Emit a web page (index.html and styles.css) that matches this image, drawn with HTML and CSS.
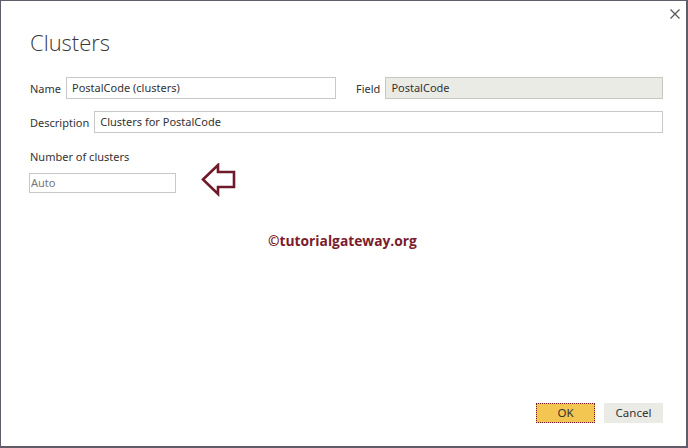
FILE: index.html
```html
<!DOCTYPE html>
<html>
<head>
<meta charset="utf-8">
<link rel="stylesheet" href="styles.css">
</head>
<body>
<div class="dialog">
  <div class="close">
    <svg width="10" height="10" viewBox="0 0 10 10"><path d="M0.5 0.5L9.5 9.5M9.5 0.5L0.5 9.5" stroke="#555" stroke-width="1.2" fill="none"/></svg>
  </div>
  <h1 class="title">Clusters</h1>
  <div class="row row-name">
    <label class="lbl">Name</label>
    <div class="input name-input">PostalCode (clusters)</div>
    <label class="lbl field-lbl">Field</label>
    <div class="input field-input">PostalCode</div>
  </div>
  <div class="row row-desc">
    <label class="lbl">Description</label>
    <div class="input desc-input">Clusters for PostalCode</div>
  </div>
  <div class="num-lbl">Number of clusters</div>
  <div class="row row-num">
    <div class="input num-input">Auto</div>
    <svg class="arrow" width="36" height="36" viewBox="0 0 36 36"><path d="M2 16.5L17 2V9H33V24H17V31Z" fill="none" stroke="#6e1a2b" stroke-width="2.6" stroke-linejoin="miter"/></svg>
  </div>
  <div class="watermark">©tutorialgateway.org</div>
  <div class="spacer"></div>
  <div class="buttons">
    <div class="btn ok">OK</div>
    <div class="btn cancel">Cancel</div>
  </div>
</div>
</body>
</html>
```
FILE: styles.css
```css
html, body {
  margin: 0;
  padding: 0;
  background: #fff;
}
.dialog {
  box-sizing: border-box;
  width: 688px;
  height: 448px;
  border-top: 1px solid #615c68;
  border-left: 1px solid #615c68;
  border-right: 2px solid #615c68;
  border-bottom: 2px solid #615c68;
  position: relative;
  display: flex;
  flex-direction: column;
  padding: 0 23px 0 29px;
  font-family: "Noto Sans", "Open Sans", sans-serif;
  font-size: 11px;
  color: #333;
}
.close {
  position: absolute;
  top: 8px;
  right: 6px;
  width: 10px;
  height: 10px;
}
.close svg { display: block; }
.title {
  margin: 26px 0 0 0;
  font-family: "Open Sans", "Noto Sans", sans-serif;
  font-weight: 300;
  font-size: 22px;
  line-height: 30px;
  color: #3a3a3a;
  height: 30px;
}
.row {
  display: flex;
  align-items: center;
}
.row-name { margin-top: 20px; }
.row-desc { margin-top: 12px; }
.lbl {
  margin-right: 5px;
  white-space: nowrap;
}
.input {
  box-sizing: border-box;
  height: 22px;
  border: 1px solid #c8c8c8;
  padding: 0 5px;
  line-height: 20px;
  white-space: nowrap;
}
.name-input { width: 270px; }
.field-lbl { margin-left: 20px; }
.field-input {
  flex: 1;
  background: #ebebe6;
  border-color: #c6c6c3;
}
.desc-input { flex: 1; }
.num-lbl {
  margin-top: 15px;
  line-height: 17px;
}
.row-num { margin-top: 8px; align-items: flex-start; }
.num-input {
  width: 147px;
  height: 20px;
  line-height: 18px;
  padding: 0 1px;
  color: #777;
  margin-left: -1px;
}
.arrow {
  margin-left: 25px;
  margin-top: -10px;
  display: block;
}
.watermark {
  margin-top: 33px;
  margin-left: 238px;
  font-family: "Open Sans", "Noto Sans", sans-serif;
  font-weight: 700;
  font-size: 13.8px;
  color: #7a1c2c;
  line-height: 18px;
}
.spacer { flex: 1; }
.buttons {
  display: flex;
  justify-content: flex-end;
  gap: 9px;
  margin-bottom: 23px;
}
.btn {
  box-sizing: border-box;
  width: 59px;
  height: 20px;
  text-align: center;
  line-height: 18px;
  font-size: 11.5px;
}
.ok {
  background: #f3c651;
  border: 1px dotted #6e1a2b;
}
.cancel {
  background: #ebebe6;
  border: 1px solid #ebebe6;
}
```
